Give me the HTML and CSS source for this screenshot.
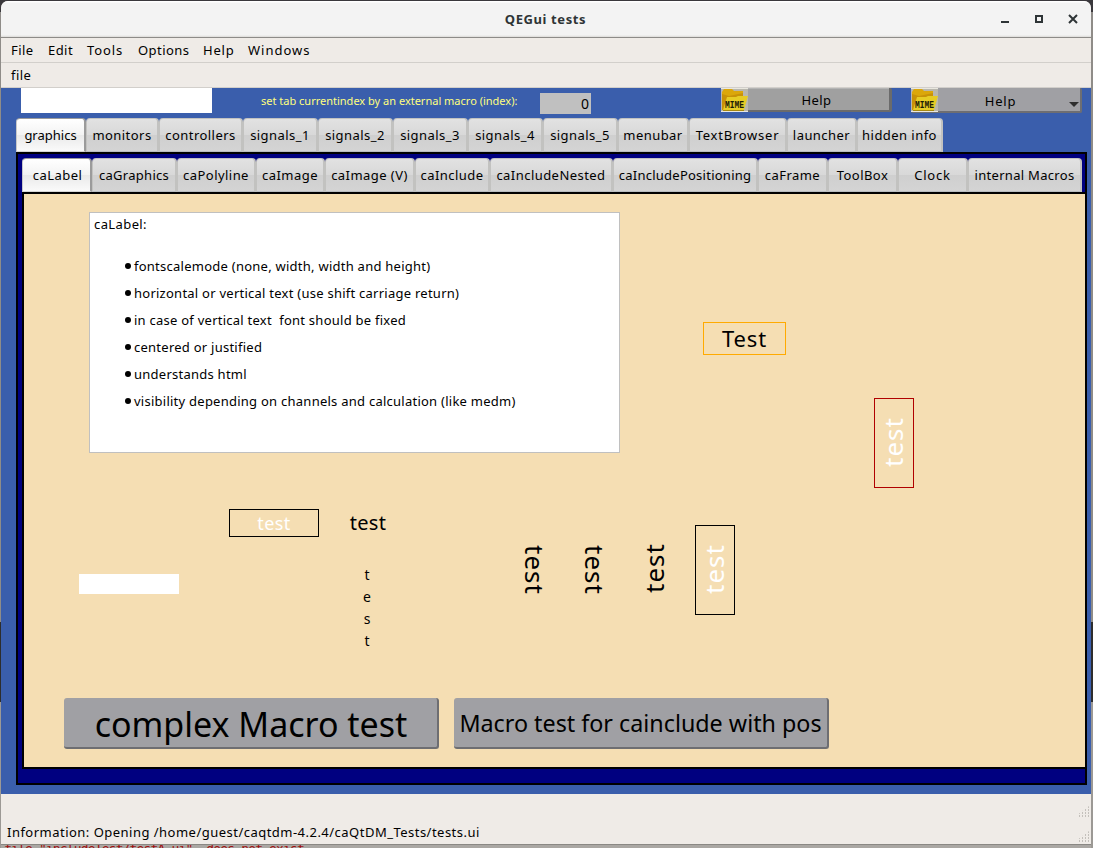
FILE: index.html
```
<!DOCTYPE html>
<html lang="en">
<head>
<meta charset="utf-8">
<title>QEGui tests</title>
<link rel="stylesheet" href="styles.css">
</head>
<body>
<svg class="defs" width="0" height="0">
  <symbol id="mime" viewBox="0 0 27 24">
    <path fill="#b9b7ae" d="M0 0h27v24H0z"/>
    <path fill="none" stroke="#e9e7df" d="M0 .5h27M0 23.500h27"/>
    <path fill="#dba70b" d="M1 4l2-3h8l2 2h9v7H7L2 21H1z"/>
    <path fill="#c89208" d="M1 6v16h2l4-13h15V5L8 8z"/>
    <path fill="#e6cc25" d="M6 9h9l2-1h10l-4 14H2z"/>
    <path fill="none" stroke="#a88a10" d="M2 22.500h21"/>
    <text x="4" y="20" textLength="19" lengthAdjust="spacingAndGlyphs">MIME</text>
  </symbol>
</svg>
<div class="desktop">
  <div class="window">
    <header class="titlebar">
      <h1>QEGui tests</h1>
      <svg class="controls" width="80" height="14" viewBox="0 0 80 14">
        <path fill="#2e3436" d="M1 9h8v2H1z"/>
        <path fill="none" stroke="#2e3436" stroke-width="2" d="M36 4h6v6h-6z"/>
        <path fill="none" stroke="#2e3436" stroke-width="2" d="M69 3l8 8M77 3l-8 8"/>
      </svg>
    </header>
    <nav class="menubar"><span>File</span><span>Edit</span><span>Tools</span><span>Options</span><span>Help</span><span>Windows</span></nav>
    <div class="toolbar"><span>file</span></div>
    <main class="panel">
      <div class="controls-row">
        <div class="entry"></div>
        <label class="hint">set tab currentindex by an external macro (index):</label>
        <output class="index">0</output>
        <div class="help help-plain"><svg width="27" height="24"><use href="#mime"/></svg><span>Help</span></div>
        <div class="help help-menu"><svg width="27" height="24"><use href="#mime"/></svg><span>Help</span><i class="arrow"></i></div>
      </div>
      <div class="tabs outer-tabs">
        <span class="tab active">graphics</span><span class="tab">monitors</span><span class="tab">controllers</span><span class="tab">signals_1</span><span class="tab">signals_2</span><span class="tab">signals_3</span><span class="tab">signals_4</span><span class="tab">signals_5</span><span class="tab">menubar</span><span class="tab">TextBrowser</span><span class="tab">launcher</span><span class="tab">hidden info</span>
      </div>
      <section class="outer-page">
        <div class="tabs inner-tabs">
          <span class="tab active">caLabel</span><span class="tab">caGraphics</span><span class="tab">caPolyline</span><span class="tab">caImage</span><span class="tab">caImage (V)</span><span class="tab">caInclude</span><span class="tab">caIncludeNested</span><span class="tab">caIncludePositioning</span><span class="tab">caFrame</span><span class="tab">ToolBox</span><span class="tab">Clock</span><span class="tab">internal Macros</span>
        </div>
        <div class="canvas">
          <div class="notes">
            <p>caLabel:</p>
            <ul>
              <li>fontscalemode (none, width, width and height)</li>
              <li>horizontal or vertical text (use shift carriage return)</li>
              <li>in case of vertical text&nbsp; font should be fixed</li>
              <li>centered or justified</li>
              <li>understands html</li>
              <li>visibility depending on channels and calculation (like medm)</li>
            </ul>
          </div>
          <div class="label orange">Test</div>
          <div class="label boxed">test</div>
          <div class="label plain">test</div>
          <div class="label blank"></div>
          <div class="label stacked"><span>t</span><span>e</span><span>s</span><span>t</span></div>
          <div class="label turned down-a">test</div>
          <div class="label turned down-b">test</div>
          <div class="label turned up up-a">test</div>
          <div class="label turned up up-black">test</div>
          <div class="label turned up up-red">test</div>
          <div class="button macro">complex Macro test</div>
          <div class="button include">Macro test for cainclude with pos</div>
        </div>
      </section>
    </main>
    <footer class="status">
      <span>Information: Opening /home/guest/caqtdm-4.2.4/caQtDM_Tests/tests.ui</span>
      <i class="grip grip-top"></i><i class="grip grip-bottom"></i>
    </footer>
  </div>
  <div class="terminal">file "includeTest/testA.ui"&nbsp; does not exist</div>
</div>
</body>
</html>
```
FILE: styles.css
```
* { box-sizing: border-box; }
body {
  margin: 0;
  font: 13px/20px "Noto Sans", sans-serif;
  letter-spacing: .45px;
  color: #000;
}
.defs { position: absolute; }
.defs text { font: bold 10px "Liberation Mono", monospace; letter-spacing: 0; fill: #1c1a05; }

.desktop {
  width: 1093px;
  height: 848px;
  overflow: hidden;
  padding: 1px 2px 0 1px;
  background: linear-gradient(#3a383c 0 12px, #8f8c88 12px 622px, #2d2d2d 622px 702px, #9c9995 702px);
}
.window { height: 844px; border-bottom: 1px solid #8a8884; border-radius: 7px 7px 0 0; overflow: hidden; background: #efebe7; }

.titlebar {
  display: grid;
  grid-template-columns: 1fr;
  align-items: center;
  height: 37px;
  border-bottom: 1px solid #8d8b88;
  background: linear-gradient(#fff 0 1px, #f3f3f3 2px 34px, #dcdad8 36px);
}
.titlebar > * { grid-area: 1 / 1; }
h1 { margin: 0; text-align: center; font: bold 13px/20px "Noto Sans", sans-serif; letter-spacing: .6px; color: #2e3436; padding-right: 1px; }
.controls { justify-self: end; margin-right: 11px; }

.menubar { display: flex; height: 25px; padding: 2px 10px 0; border-bottom: 1px solid #d2cfcb; }
.menubar span:nth-child(1) { width: 37px; }
.menubar span:nth-child(2) { width: 39px; }
.menubar span:nth-child(3) { width: 51px; letter-spacing: .9px; }
.menubar span:nth-child(4) { width: 65px; }
.menubar span:nth-child(5) { width: 45px; letter-spacing: .8px; }
.menubar span:nth-child(6) { letter-spacing: 1px; }
.toolbar { height: 25px; padding: 2px 10px 0; border-bottom: 1px solid #d2cfcb; }

.panel { height: 706px; padding: 0 4px 9px 15px; background: #3a5eac; }
.controls-row { display: flex; height: 30px; padding-left: 5px; }
.entry { width: 191px; height: 25px; background: #fff; }
.hint { width: 279px; margin-left: 49px; padding-top: 3px; font-size: 11px; letter-spacing: 0; color: #ffff7f; }
.index { width: 51px; height: 21px; margin-top: 5px; padding: 1px 2px 0 0; background: #c0c0c0; text-align: right; letter-spacing: 0; font-size: 14px; }
.help { position: relative; display: flex; height: 24px; border-radius: 2px; background: #a0a0a0; }
.help svg { flex: none; }
.help-plain { width: 171px; margin-left: 130px; border: solid #6b6b6b; border-width: 0 3px 2px 0; box-shadow: inset 0 1px #b4b4b4; }
.help-menu { width: 171px; height: 25px; margin-left: 19px; border: solid #6e6e72; border-width: 0 2px 2px 0; background: #a0a0a4; }
.help-plain span { width: 137px; padding-top: 2px; text-align: center; }
.help-menu span { width: 125px; padding-top: 3px; text-align: center; letter-spacing: .8px; }
.arrow { margin: 14px 0 0 6px; border: solid transparent; border-width: 5px 5px 0; border-top-color: #2e2e2e; height: 5px; }

.tabs { display: flex; height: 34px; }
.tab {
  flex: none;
  padding-top: 6px;
  text-align: center;
  white-space: nowrap;
  border: solid #c2c2c0;
  border-width: 1px 2px 1px 1px;
  border-bottom-color: #b8bcc0;
  border-radius: 4px 4px 0 0;
  background: linear-gradient(#e2e2e2, #d8d8d8 50%, #cfcfcf 50%, #d4d4d4);
}
.tab.active {
  border-color: #9b9b9b #9b9b9b #d5d5d5 #c8c8c8;
  background: linear-gradient(#fff, #f3f3f3 50%, #e9e9e9 50%, #fafafa);
}
.outer-tabs .tab { width: 75px; }
.outer-tabs .tab:nth-child(1) { width: 70px; letter-spacing: 0; }
.outer-tabs .tab:nth-child(2) { width: 73px; }
.outer-tabs .tab:nth-child(3) { width: 84px; }
.outer-tabs .tab:nth-child(9) { width: 71px; }
.outer-tabs .tab:nth-child(10) { width: 98px; letter-spacing: .75px; }
.outer-tabs .tab:nth-child(11) { width: 70px; }
.outer-tabs .tab:nth-child(12) { width: 86px; }

.outer-page { height: 633px; padding: 4px 0 14px 4px; border: 2px solid #000; border-right-width: 0; background: #000080; box-shadow: inset -2px 0 #000; }
.inner-tabs .tab { width: 70px; }
.inner-tabs .tab:nth-child(1) { padding-left: 2px; }
.inner-tabs .tab:nth-child(2) { width: 85px; letter-spacing: .3px; }
.inner-tabs .tab:nth-child(3) { width: 79px; }
.inner-tabs .tab:nth-child(4) { width: 69px; }
.inner-tabs .tab:nth-child(5) { width: 90px; }
.inner-tabs .tab:nth-child(6) { width: 75px; }
.inner-tabs .tab:nth-child(7) { width: 123px; }
.inner-tabs .tab:nth-child(8) { width: 145px; letter-spacing: .25px; }
.inner-tabs .tab:nth-child(11) { letter-spacing: .8px; }
.inner-tabs .tab:nth-child(12) { width: 114px; letter-spacing: .3px; }

/* Free-form display: widgets sit at their designer coordinates. */
.canvas { position: relative; height: 577px; border: 2px solid #000; background: #f5deb3; }
.notes { position: absolute; left: 65px; top: 18px; width: 531px; height: 241px; padding: 1px 4px; border: 1px solid #c0c0c0; background: #fff; letter-spacing: .25px; }
.notes p { margin: 0 0 19px; letter-spacing: .4px; }
.notes ul { margin: 0; padding: 0 0 0 31px; list-style: none; line-height: 27px; }
.notes li { display: flex; align-items: center; gap: 3px; }
.notes li::before { content: ""; width: 6px; height: 6px; margin-top: -1px; border-radius: 50%; background: #000; }

.label { position: absolute; display: flex; align-items: center; justify-content: center; }
.orange { left: 679px; top: 128px; width: 83px; height: 33px; padding-bottom: 2px; border: 1px solid #ffaa00; font-size: 22px; letter-spacing: .8px; }
.boxed { left: 205px; top: 315px; width: 90px; height: 28px; border: 1px solid #000; color: #fff; font-size: 18px; }
.plain { left: 314px; top: 315px; width: 60px; height: 28px; font-size: 20px; letter-spacing: .3px; }
.blank { left: 55px; top: 380px; width: 100px; height: 20px; background: #fff; }
.stacked { left: 333px; top: 370px; width: 20px; flex-direction: column; line-height: 22px; letter-spacing: 0; font-size: 14px; }
.turned { width: 40px; height: 90px; top: 331px; writing-mode: vertical-rl; font-size: 26px; line-height: 38px; letter-spacing: 1px; }
.up { transform: rotate(180deg); }
.down-a { left: 491px; }
.down-b { left: 551px; }
.up-a { left: 610px; top: 329px; }
.up-black { left: 671px; border: 1px solid #000; color: #fff; padding: 2px 0 0 3px; }
.up-red { left: 850px; top: 204px; border: 1px solid #b00000; color: #fff; padding: 2px 0 0 3px; }

.button { position: absolute; top: 504px; width: 375px; height: 51px; display: flex; align-items: center; justify-content: center; white-space: nowrap; border: solid #6e6e72; border-width: 0 2px 2px 0; border-radius: 3px; background: #a0a0a4; letter-spacing: 0; }
.macro { left: 40px; font-size: 34px; padding: 2px 0 0 1px; }
.include { left: 430px; font-size: 23.300px; }

.status { position: relative; height: 49px; padding: 28px 6px 0; letter-spacing: .48px; }
.grip { position: absolute; right: 2px; width: 12px; height: 12px; background: conic-gradient(from 90deg at 2px 2px, transparent 270deg, #c4c0bb 0) 0 0 / 3px 3px; clip-path: polygon(100% 0, 100% 100%, 0 100%, 0 75%); }
.grip-top { top: 12px; }
.grip-bottom { top: 37px; }

.terminal { height: 3px; overflow: hidden; padding-left: 3px; font: 13px/8px "DejaVu Sans Mono", monospace; letter-spacing: -.85px; color: #a01010; background: #aaa7a3; white-space: nowrap; }
```
